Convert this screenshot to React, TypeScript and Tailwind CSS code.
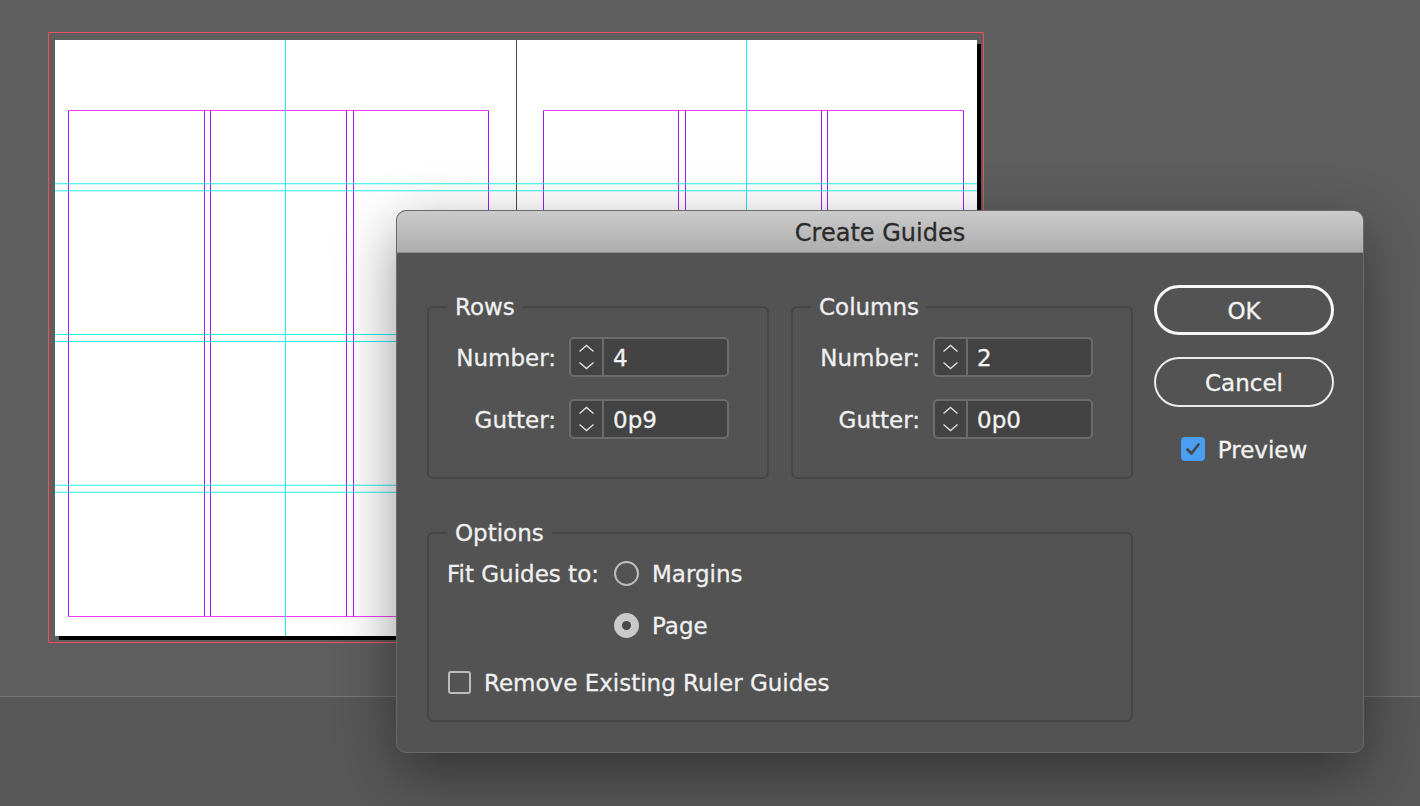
import React from 'react';

const FONT = '"DejaVu Sans", "Noto Sans", sans-serif';

// InDesign spread with margin, column and ruler guides
function Spread() {
  const W = 922;
  const H = 596;
  const rowGuides = [143.75, 150.75, 294.5, 301.5, 445.25, 452.25];
  const colGuides = [230.5, 691.5];
  const pages = [
    { left: 13.5, right: 433.5, cols: [13.5, 149.5, 155.5, 291.5, 298.5, 433.5] },
    { left: 488.5, right: 908.5, cols: [488.5, 623.5, 630.5, 766.5, 772.5, 908.5] },
  ];
  return (
    <svg width={W} height={H} className="block">
      <rect width={W} height={H} fill="#ffffff" />
      <line x1={461.5} y1={0} x2={461.5} y2={H} stroke="#4b4b4b" strokeWidth={1} />
      {pages.map((p) => (
        <g key={p.left}>
          <line x1={p.left} y1={70.5} x2={p.right} y2={70.5} stroke="#ef3ef2" strokeWidth={1} />
          <line x1={p.left} y1={576.5} x2={p.right} y2={576.5} stroke="#ef3ef2" strokeWidth={1} />
          {p.cols.map((x) => (
            <line key={x} x1={x} y1={70.5} x2={x} y2={576.5} stroke="#a11ef6" strokeWidth={1} />
          ))}
        </g>
      ))}
      {rowGuides.map((y) => (
        <line key={y} x1={0} y1={y} x2={W} y2={y} stroke="#22eeee" strokeWidth={1} />
      ))}
      {colGuides.map((x) => (
        <line key={x} x1={x} y1={0} x2={x} y2={H} stroke="#22eeee" strokeWidth={1} />
      ))}
    </svg>
  );
}

function Spinner({ value }: { value: string }) {
  return (
    <div className="flex h-[40px] w-[160px] rounded-[5px] border-2 border-[#6c6c6c] bg-[#434343]">
      <div className="flex w-[33px] shrink-0 items-center justify-center border-r-2 border-[#6c6c6c]">
        <svg width="33" height="36" fill="none" stroke="#dedede" strokeWidth={1.4}>
          <polyline points="8.5,12.5 15.5,6.5 22.5,12.5" />
          <polyline points="8.5,23.5 15.5,29.5 22.5,23.5" />
        </svg>
      </div>
      <div className="flex items-center pl-[9px] pt-[2px] text-[23px] leading-none text-[#f2f2f2]">{value}</div>
    </div>
  );
}

function Group({ title, className = '', children }: { title: string; className?: string; children: React.ReactNode }) {
  return (
    <fieldset className={`rounded-[6px] border-2 border-[#464646] ${className}`}>
      <legend className="ml-[18px] px-[8px] text-[23px] leading-[28px] text-[#f0f0f0]">{title}</legend>
      {children}
    </fieldset>
  );
}

function NumberGutter({ number, gutter }: { number: string; gutter: string }) {
  return (
    <div className="grid grid-cols-[127px_160px] items-center gap-x-[13px] gap-y-[22px] pt-[16px] pb-[38px] text-[23px] text-[#f0f0f0]">
      <span className="pt-[2px] text-right">Number:</span>
      <Spinner value={number} />
      <span className="pt-[2px] text-right">Gutter:</span>
      <Spinner value={gutter} />
    </div>
  );
}

function Radio({ checked = false }: { checked?: boolean }) {
  if (checked) {
    return (
      <span className="flex h-[25px] w-[25px] shrink-0 items-center justify-center rounded-full bg-[#c9c9c9]">
        <span className="h-[9px] w-[9px] rounded-full bg-[#474747]" />
      </span>
    );
  }
  return <span className="h-[25px] w-[25px] shrink-0 rounded-full border-2 border-[#bdbdbd]" />;
}

export default function App() {
  return (
    <div className="relative h-[806px] w-[1420px] overflow-hidden bg-[#585858]" style={{ fontFamily: FONT }}>
      {/* pasteboard */}
      <div className="h-[697px] border-b border-[#777777] bg-[#5e5e5e] pl-[48px] pt-[32px]">
        <div className="h-[611px] w-[936px] border border-[#ee4f63] pl-[6px] pt-[7px]">
          <div className="w-[922px] shadow-[4px_4px_0_#000]">
            <Spread />
          </div>
        </div>
      </div>

      {/* Create Guides dialog */}
      <div className="absolute left-[396px] top-[210px] h-[543px] w-[968px] overflow-hidden rounded-[10px] border border-[#6a6a6a] bg-[#535353] shadow-[0_20px_60px_rgba(0,0,0,0.42)] [-webkit-text-stroke:0.3px_currentColor]">
        <div className="flex h-[42px] items-center justify-center border-b border-[#8c8c8c] bg-gradient-to-b from-[#cbcbcb] to-[#adadad] pt-[3px] text-[24px] text-[#2a2a2a]">
          Create Guides
        </div>
        <div className="flex items-start pl-[30px]">
          <div className="flex w-[706px] flex-col pt-[40px]">
            <div className="flex gap-[22px]">
              <Group title="Rows" className="w-[342px]">
                <NumberGutter number="4" gutter="0p9" />
              </Group>
              <Group title="Columns" className="w-[342px]">
                <NumberGutter number="2" gutter="0p0" />
              </Group>
            </div>
            <Group title="Options" className="mt-[40px]">
              <div className="flex flex-col pb-[25px] pl-[18px] pt-[13px] text-[23px] text-[#f0f0f0]">
                <div className="flex h-[26px] items-center">
                  <span className="w-[167px] shrink-0 pt-[2px]">Fit Guides to:</span>
                  <Radio />
                  <span className="ml-[13px] pt-[2px]">Margins</span>
                </div>
                <div className="mt-[26px] flex h-[26px] items-center pl-[167px]">
                  <Radio checked />
                  <span className="ml-[13px] pt-[2px]">Page</span>
                </div>
                <div className="mt-[31px] flex h-[26px] items-center">
                  <span className="ml-[1px] h-[23px] w-[23px] shrink-0 rounded-[3px] border-2 border-[#bcbcbc]" />
                  <span className="ml-[13px] pt-[2px]">Remove Existing Ruler Guides</span>
                </div>
              </div>
            </Group>
          </div>

          <div className="ml-[21px] flex w-[180px] flex-col pt-[32px] text-[23px] text-[#f4f4f4]">
            <button className="flex h-[50px] items-center justify-center rounded-full border-[3px] border-[#f7f7f7] pt-[2px]">OK</button>
            <button className="mt-[22px] flex h-[50px] items-center justify-center rounded-full border-2 border-[#ececec] pt-[2px]">Cancel</button>
            <div className="mt-[29px] flex items-center justify-center gap-[13px]">
              <span className="flex h-[24px] w-[24px] items-center justify-center rounded-[4px] bg-[#4a9ff2]">
                <svg width="18" height="18" viewBox="0 0 18 18" fill="none" stroke="#444444" strokeWidth={2.6} strokeLinecap="round" strokeLinejoin="round">
                  <polyline points="3.5,9.5 7.5,13.5 14.5,4.5" />
                </svg>
              </span>
              <span className="pt-[2px] leading-[24px]">Preview</span>
            </div>
          </div>
        </div>
      </div>
    </div>
  );
}
